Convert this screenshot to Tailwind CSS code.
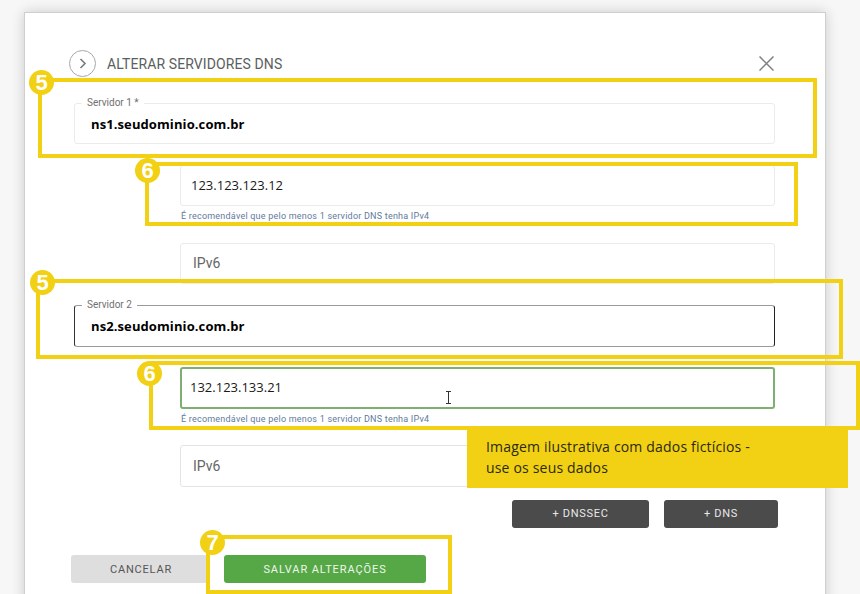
<!DOCTYPE html>
<html lang="pt-BR">

<head>
    <meta charset="UTF-8">
    <meta name="viewport" content="width=device-width, initial-scale=1.0">
    <script src="https://cdn.jsdelivr.net/npm/@tailwindcss/browser@4"></script>
    <title>Alterar servidores DNS</title>
</head>

<body class="relative w-[860px] h-[594px] overflow-hidden bg-[#f7f7f7] font-['Roboto',sans-serif]">

    <!-- modal -->
    <main class="ml-[24px] mt-[12px] w-[802px] h-[600px] bg-white border border-[#cfcfcf] shadow-[0_0_12px_rgba(0,0,0,0.18)] pt-[37px] pl-[49px] pr-[51px]">
        <header class="flex items-center justify-between h-[27px]">
            <div class="flex items-center -ml-[5px]">
                <span class="flex items-center justify-center w-[27px] h-[27px] rounded-full border-[1.5px] border-[#a3a9a9]">
                    <svg width="9" height="13" viewBox="0 0 9 13" fill="none" stroke="#747c7c" stroke-width="1.6"><path d="M2.5 2 7 6.5 2.5 11" /></svg>
                </span>
                <h1 class="ml-[11px] mt-[2px] text-[14px] tracking-[0.1px] text-[#5a6060]">ALTERAR SERVIDORES DNS</h1>
            </div>
            <svg class="-mt-[1px]" width="15" height="15" viewBox="0 0 15 15" fill="none" stroke="#7b8281" stroke-width="1.5"><path d="M.5 .5 14.5 14.5M14.5 .5 .5 14.5" /></svg>
        </header>

        <!-- servidor 1 -->
        <div class="relative mt-[26px] h-[41px] w-[701px] border border-[#ebebeb] rounded-[3px] flex items-center pl-[16px]">
            <span class="absolute -top-[7px] left-[7px] bg-white px-[5px] text-[10px] leading-[11px] text-[#707070]">Servidor 1 *</span>
            <span class="mt-[2px] font-['Open_Sans',sans-serif] font-bold text-[13px] tracking-[0.1px] text-black">ns1.seudominio.com.br</span>
        </div>

        <div class="ml-[106px] mt-[21px] w-[595px]">
            <div class="h-[41px] pt-[1px] border border-[#ebebeb] rounded-[3px] flex items-center pl-[10px] font-['Open_Sans',sans-serif] text-[13px] text-[#1a1a1a]">123.123.123.12</div>
            <p class="mt-[5px] ml-[1px] text-[9px] leading-[11px] text-[#5f7a9c] tracking-[0.22px]">É recomendável que pelo menos 1 servidor DNS tenha IPv4</p>
            <div class="mt-[21px] h-[41px] border border-[#ebebeb] rounded-[3px] flex items-center pl-[12px] text-[14px] text-[#666]">IPv6</div>
        </div>

        <!-- servidor 2 -->
        <div class="relative mt-[21px] h-[42px] w-[701px] border border-[#9a9a9a] border-l-[#333] border-r-[#222] rounded-[3px] flex items-center pl-[16px]">
            <span class="absolute -top-[7px] left-[7px] bg-white px-[5px] text-[10px] leading-[11px] text-[#707070]">Servidor 2</span>
            <span class="mt-[1px] font-['Open_Sans',sans-serif] font-bold text-[13px] tracking-[0.1px] text-black">ns2.seudominio.com.br</span>
        </div>

        <div class="ml-[106px] mt-[20px] w-[595px]">
            <div class="h-[42px] border-2 border-[#7eae72] rounded-[3px] flex items-center pl-[8px] font-['Open_Sans',sans-serif] text-[13px] text-[#1a1a1a]">132.123.133.21</div>
            <p class="mt-[5px] ml-[1px] text-[9px] leading-[11px] text-[#5f7a9c] tracking-[0.22px]">É recomendável que pelo menos 1 servidor DNS tenha IPv4</p>
            <div class="mt-[20px] h-[42px] border border-[#e4e4e4] rounded-[3px] flex items-center pl-[12px] text-[14px] text-[#666]">IPv6</div>
        </div>

        <div class="flex justify-end gap-[15px] mt-[13px] w-[704px]">
            <button class="w-[137px] h-[28px] bg-[#4b4b4b] rounded-[3px] text-[11px] tracking-[0.7px] text-[#e8e8e8]">+ DNSSEC</button>
            <button class="w-[114px] h-[28px] bg-[#4b4b4b] rounded-[3px] text-[11px] tracking-[0.7px] text-[#e8e8e8]">+ DNS</button>
        </div>

        <div class="flex gap-[16px] mt-[27px] -ml-[3px]">
            <button class="w-[137px] h-[28px] pt-[2px] pl-[3px] bg-[#dedede] rounded-[3px] text-[11px] tracking-[0.8px] text-[#555]">CANCELAR</button>
            <button class="w-[202px] h-[28px] pt-[2px] bg-[#56a846] rounded-[3px] text-[11px] tracking-[0.9px] text-[#eef6ec]">SALVAR ALTERAÇÕES</button>
        </div>
    </main>

    <!-- marcacoes amarelas por cima do print -->
    <div class="absolute left-[38px] top-[78px] w-[779px] h-[80px] border-4 border-[#f2d013]"></div>
    <div class="absolute left-[145px] top-[162px] w-[653px] h-[64px] border-4 border-[#f2d013]"></div>
    <div class="absolute left-[36px] top-[279px] w-[807px] h-[80px] border-4 border-[#f2d013]"></div>
    <div class="absolute left-[149px] top-[361px] w-[711px] h-[69px] border-4 border-[#f2d013]"></div>
    <div class="absolute left-[206px] top-[535px] w-[246px] h-[59px] border-4 border-[#f2d013]"></div>

    <span class="absolute left-[29px] top-[70px] w-[25px] h-[25px] rounded-full bg-[#f2d013] flex items-center justify-center font-['Liberation_Sans',sans-serif] font-bold text-[22px] text-white">5</span>
    <span class="absolute left-[135px] top-[158px] w-[25px] h-[25px] rounded-full bg-[#f2d013] flex items-center justify-center font-['Liberation_Sans',sans-serif] font-bold text-[22px] text-white">6</span>
    <span class="absolute left-[30px] top-[270px] w-[25px] h-[25px] rounded-full bg-[#f2d013] flex items-center justify-center font-['Liberation_Sans',sans-serif] font-bold text-[22px] text-white">5</span>
    <span class="absolute left-[137px] top-[361px] w-[25px] h-[25px] rounded-full bg-[#f2d013] flex items-center justify-center font-['Liberation_Sans',sans-serif] font-bold text-[22px] text-white">6</span>
    <span class="absolute left-[200px] top-[530px] w-[25px] h-[25px] rounded-full bg-[#f2d013] flex items-center justify-center font-['Liberation_Sans',sans-serif] font-bold text-[22px] text-white">7</span>

    <div class="absolute left-[467px] top-[427px] w-[381px] h-[61px] bg-[#f2d013] pl-[19px] pt-[9px] font-['Open_Sans',sans-serif] text-[14px] tracking-[0.18px] leading-[21px] text-[#2b2a10]">
        Imagem ilustrativa com dados fictícios -<br>use os seus dados
    </div>

    <!-- cursor de texto -->
    <svg class="absolute left-[445px] top-[391px]" width="7" height="13" viewBox="0 0 7 13" fill="none" stroke="#333" stroke-width="1"><path d="M1 .5H6M3.5 .5V12.5M1 12.5H6" /></svg>

</body>

</html>
